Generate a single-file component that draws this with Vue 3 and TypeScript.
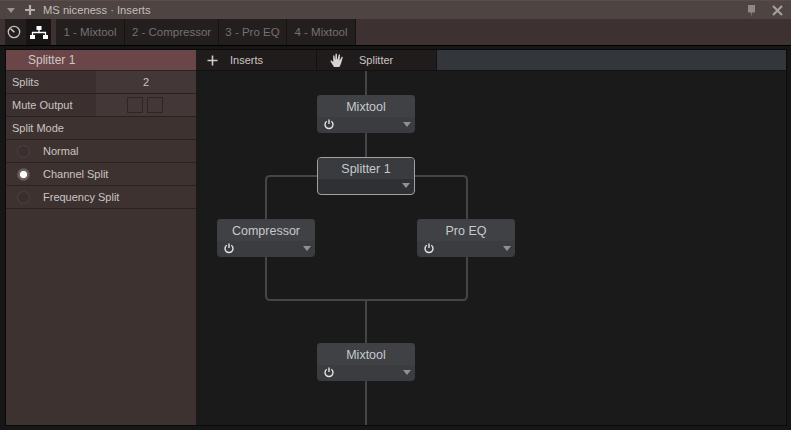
<script setup lang="ts">
const tabs = [
  { label: '1 - Mixtool', w: 69 },
  { label: '2 - Compressor', w: 94 },
  { label: '3 - Pro EQ', w: 68 },
  { label: '4 - Mixtool', w: 69 },
]
const modes = [
  { label: 'Normal', on: false },
  { label: 'Channel Split', on: true },
  { label: 'Frequency Split', on: false },
]
const nodes = [
  { name: 'Mixtool', x: 121, y: 24, power: true, sel: false },
  { name: 'Splitter 1', x: 121, y: 86, power: false, sel: true },
  { name: 'Compressor', x: 21, y: 148, power: true, sel: false },
  { name: 'Pro EQ', x: 221, y: 148, power: true, sel: false },
  { name: 'Mixtool', x: 121, y: 272, power: true, sel: false },
]
</script>

<template>
  <div class="win">
    <header class="title">
      <span class="tri"></span>
      <svg class="plus" width="10" height="10" viewBox="0 0 10 10"><path d="M5 0v10M0 5h10" stroke="#b3adab" stroke-width="2.2" /></svg>
      <span class="title-text">MS niceness · Inserts</span>
      <svg class="pin" width="9" height="12" viewBox="0 0 9 12"><path d="M1 0h7v7.500H5L4.500 12 4 7.500H1z" fill="#8d8785" /></svg>
      <svg class="close" width="11" height="11" viewBox="0 0 11 11"><path d="M1 1l9 9M10 1l-9 9" stroke="#a5a09e" stroke-width="2.200" /></svg>
    </header>
    <nav class="tabbar">
      <div class="ib clock">
        <svg width="14" height="14" viewBox="0 0 14 14" fill="none"><circle cx="7" cy="7" r="5.700" stroke="#c4c1c0" stroke-width="1.300" /><path d="M3.600 3.800L7.400 7.200" stroke="#d8d6d5" stroke-width="1.500" /></svg>
      </div>
      <div class="ib active">
        <svg width="18" height="13" viewBox="0 0 18 13"><path d="M9 3v3.500M2.500 10V6.500h13V10" fill="none" stroke="#fff" stroke-width="1.300" /><rect x="6.500" y="0" width="5" height="4" fill="#fff" /><rect x="0" y="9" width="5" height="4" fill="#fff" /><rect x="13" y="9" width="5" height="4" fill="#fff" /></svg>
      </div>
      <div class="tabs">
        <div v-for="t in tabs" :key="t.label" class="tab" :style="{ width: t.w + 'px' }">{{ t.label }}</div>
      </div>
    </nav>
    <main class="frame">
      <aside class="side">
        <div class="side-head">Splitter 1</div>
        <div class="row"><span class="lab">Splits</span><span class="val">2</span></div>
        <div class="row"><span class="lab">Mute Output</span><span class="val boxes"><i></i><i></i></span></div>
        <div class="row plain"><span class="lab">Split Mode</span></div>
        <div v-for="m in modes" :key="m.label" class="row plain mode">
          <span class="radio" :class="{ on: m.on }"></span>
          <span>{{ m.label }}</span>
        </div>
      </aside>
      <section class="right">
        <div class="toolbar">
          <div class="tool">
            <svg width="11" height="11" viewBox="0 0 11 11"><path d="M5.500 0.500v10M0.500 5.500h10" stroke="#cfcbca" stroke-width="1.600" /></svg>
            <span>Inserts</span>
          </div>
          <div class="tool second">
            <svg width="14" height="14" viewBox="0 0 14 14"><path d="M4 14 .6 8.600C.1 7.800 1.100 7 1.800 7.700L3.200 9V3c0-.9 1.200-.9 1.300 0l.5 3.600h.3L5.500 1.200c0-1 1.400-1 1.400 0l.2 5.400h.3L8.700 2c.1-.9 1.400-.9 1.300 0L9.600 7.200h.3l1.500-3c.4-.9 1.600-.4 1.300.4L11.200 10c-.4 1.500-1 2.800-1.800 4z" fill="#d6d3d1" /></svg>
            <span>Splitter</span>
          </div>
          <div class="fill"></div>
        </div>
        <div class="canvas">
          <svg class="wires" width="590" height="354" viewBox="0 0 590 354" fill="none">
            <path d="M170 0V24M170 62V86M170 229V272M170 310V354" stroke="#434549" stroke-width="2" />
            <path d="M121 105H74Q70 105 70 109V148M70 186V225Q70 229 74 229H267Q271 229 271 225V186M271 148V109Q271 105 267 105H219" stroke="#434549" stroke-width="2" />
          </svg>
          <div v-for="(n, i) in nodes" :key="i" class="node" :class="{ sel: n.sel }" :style="{ left: n.x + 'px', top: n.y + 'px' }">
            <div class="node-name">{{ n.name }}</div>
            <div class="node-foot">
              <svg v-if="n.power" width="10" height="11" viewBox="0 0 10 11" fill="none"><path d="M2.700 2.300a4 4 0 1 0 4.600 0" stroke="#e4e4e4" stroke-width="1.400" /><path d="M5 .5v4.500" stroke="#e4e4e4" stroke-width="1.400" /></svg>
              <span v-else></span>
              <span class="drop"></span>
            </div>
          </div>
        </div>
      </section>
    </main>
  </div>
</template>

<style scoped>
.win {
  width: 791px;
  height: 430px;
  display: flex;
  flex-direction: column;
  overflow: hidden;
  background: #3d3231;
  font-family: "Liberation Sans", Arial, sans-serif;
  font-size: 11px;
  color: #c9c5c3;
}
.title {
  height: 19px;
  flex: none;
  box-sizing: border-box;
  display: flex;
  align-items: center;
  padding: 0 8px 0 7px;
  background: #4e4441;
  border-top: 1px solid #5e4a48;
}
.tri {
  width: 0;
  height: 0;
  border-left: 4.5px solid transparent;
  border-right: 4.5px solid transparent;
  border-top: 5.5px solid #9a9391;
}
.plus { margin-left: 10px; }
.title-text {
  margin-left: 8px;
  flex: 1;
  font-size: 11.2px;
  color: #c4bfbd;
}
.pin { margin: 2px 16px 0 0; }
.close { margin-top: 1px; }
.tabbar {
  height: 26px;
  flex: none;
  display: flex;
  background: #3d3231;
}
.ib {
  width: 26px;
  height: 26px;
  display: flex;
  align-items: center;
  justify-content: center;
  background: #241f1f;
}
.ib.clock {
  width: 21px;
  margin-left: 5px;
  padding-left: 2px;
  box-sizing: border-box;
  justify-content: flex-start;
}
.ib.active {
  width: 25px;
  background: #181414;
}
.tabs {
  margin-left: 5px;
  display: flex;
  gap: 1px;
  background: #141212;
}
.tab {
  box-sizing: border-box;
  margin-right: -1px;
  border-right: 1px solid #141212;
  display: flex;
  align-items: center;
  justify-content: center;
  background: #231f1f;
  color: #77716f;
  font-size: 11.5px;
}
.frame {
  flex: 1;
  min-height: 0;
  display: flex;
  box-sizing: border-box;
  border-top: 1px solid #000;
  background: #161616;
  padding: 4px 5px 5px 6px;
  position: relative;
}
.frame::after {
  content: "";
  position: absolute;
  inset: 3px 4px 4px 5px;
  border: 1px solid #0a0a0a;
  pointer-events: none;
}
.side {
  width: 190px;
  flex: none;
  background: #3e3231;
}
.side-head {
  height: 20px;
  padding-left: 22px;
  line-height: 20px;
  background: #6a4648;
  color: #cfc7c6;
  font-size: 12px;
  border-bottom: 1px solid #2b2322;
}
.row {
  height: 23px;
  box-sizing: border-box;
  display: flex;
  align-items: stretch;
  border-bottom: 1px solid #2a2221;
  line-height: 22px;
}
.lab {
  width: 90px;
  padding-left: 6px;
  box-sizing: border-box;
  white-space: nowrap;
  background: #3b302f;
}
.val {
  flex: 1;
  text-align: center;
  background: #433837;
}
.boxes {
  display: flex;
  justify-content: center;
  align-items: center;
  gap: 4px;
  padding-right: 2px;
}
.boxes i {
  width: 16px;
  height: 16px;
  box-sizing: border-box;
  border: 1px solid #2c2625;
}
.plain .lab { background: none; }
.mode { align-items: center; padding-left: 11px; }
.radio {
  width: 13px;
  height: 13px;
  box-sizing: border-box;
  margin-right: 13px;
  border-radius: 50%;
  border: 1px solid #4c4241;
  background: #3a2f2e;
  flex: none;
}
.radio.on {
  background: radial-gradient(circle, #fff 0 3.2px, #6a6160 4px);
  border-color: #5a5150;
}
.right {
  flex: 1;
  min-width: 0;
  display: flex;
  flex-direction: column;
}
.toolbar {
  height: 20px;
  flex: none;
  display: flex;
  background: #111;
}
.tool {
  width: 120px;
  display: flex;
  align-items: center;
  gap: 12px;
  padding-left: 11px;
  box-sizing: border-box;
  background: #211c1c;
  color: #c9c5c3;
}
.tool.second {
  margin-left: 1px;
  width: 119px;
  padding-left: 13px;
  gap: 15px;
}
.fill {
  flex: 1;
  margin-left: 1px;
  background: #33363b;
}
.canvas {
  flex: 1;
  position: relative;
  overflow: hidden;
  background: #1a1a1a;
  border-top: 1px solid #111;
}
.wires {
  position: absolute;
  left: 0;
  top: 0;
}
.node {
  position: absolute;
  width: 98px;
  height: 38px;
  box-sizing: border-box;
  border-radius: 4px;
  overflow: hidden;
  background: #3a3c40;
  display: flex;
  flex-direction: column;
}
.node.sel {
  border: 1px solid #a0a2a5;
  background: #2e3034;
}
.node-name {
  height: 22px;
  flex: none;
  text-align: center;
  line-height: 24px;
  font-size: 12.5px;
  color: #c6c9cd;
  background: #3f4145;
}
.node.sel .node-name {
  height: 21px;
  line-height: 22px;
  background: #393b3f;
}
.node-foot {
  flex: 1;
  display: flex;
  align-items: center;
  justify-content: space-between;
  padding: 0 4px 2px 7px;
}
.drop {
  width: 0;
  height: 0;
  border-left: 4.5px solid transparent;
  border-right: 4.5px solid transparent;
  border-top: 5.5px solid #8e9094;
}
</style>

<style>
html, body { background: #1a1a1a; }
</style>
